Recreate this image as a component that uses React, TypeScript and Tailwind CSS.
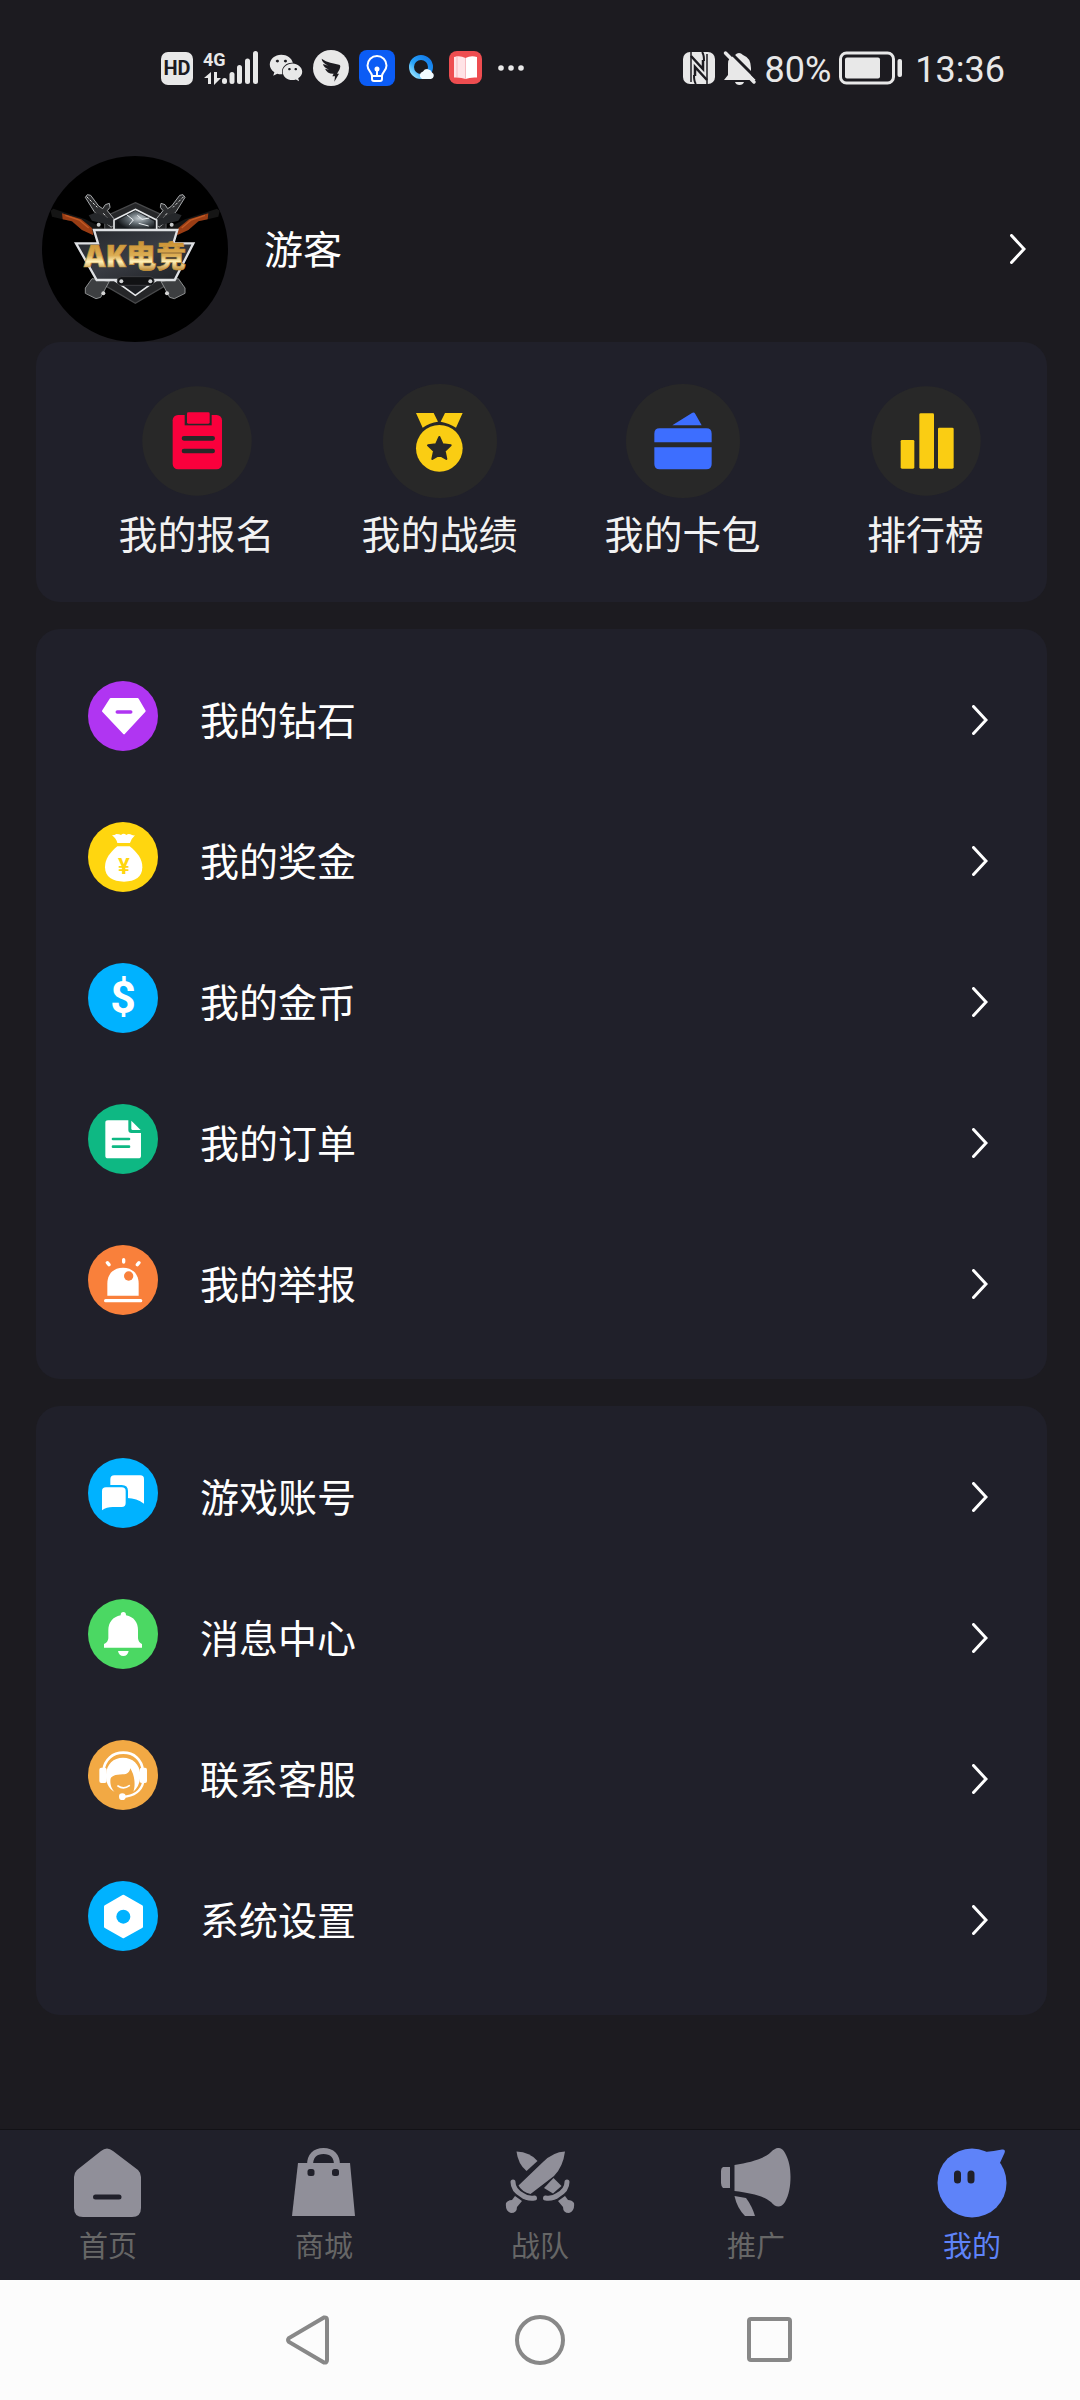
import type { ReactNode } from "react"
import { useState } from "react"
import { FaWeixin } from "react-icons/fa"
import { clsx } from "clsx"

interface MenuItem {
  label: string
  color: string
  icon: ReactNode
}

interface TabItem {
  label: string
  icon: ReactNode
}

function Chevron() {
  return (
    <svg viewBox="0 0 16 30" className="w-4 h-[30px] shrink-0" fill="none" stroke="#fff" strokeWidth="3">
      <path d="M1.5 1.5 14 15 1.5 28.5" strokeLinecap="round" strokeLinejoin="miter" />
    </svg>
  )
}

// ---------- status bar ----------

function SignalIcon() {
  return (
    <svg viewBox="0 0 56 36" className="w-14 h-9" fill="#e8e8e8">
      <text x="0" y="16" fontFamily="Roboto" fontWeight="700" fontSize="18">
        4G
      </text>
      <path d="M1 28 8 22V34H5V28ZM11 22H14V28H18L11 35Z" />
      <rect x="19" y="28" width="5" height="6" rx="2.5" />
      <rect x="26.5" y="22" width="5" height="12" rx="2.5" />
      <rect x="34" y="15" width="5" height="19" rx="2.5" />
      <rect x="42" y="8.5" width="5" height="25.5" rx="2.5" />
      <rect x="50" y="1" width="5" height="33" rx="2.5" />
    </svg>
  )
}

function BirdIcon() {
  return (
    <svg viewBox="0 0 108 108" className="size-9">
      <circle cx="54" cy="54" r="54" fill="#e8e8e8" />
      <path
        d="M26 26C42 38 62 40 78 44 84 46 82 52 79 59L72 71H78L64 95 66 79H58L62 71C50 72 40 66 36 56L48 59C38 55 31 49 30 42L46 47C34 41 26 34 26 26Z"
        fill="#1c1b20"
      />
    </svg>
  )
}

function BulbIcon() {
  return (
    <svg viewBox="0 0 36 36" className="size-9" fill="none" stroke="#fff" strokeWidth="2">
      <rect width="36" height="36" rx="8" fill="#0b5cf5" stroke="none" />
      <path d="M13 26C13 22 8.5 21 8.5 15.5a9.5 9.5 0 0 1 19 0C27.5 21 23 22 23 26Z" />
      <path d="M13 26V29Q13 31 15 31H21Q23 31 23 29V26M18 19V26" />
      <circle cx="18" cy="19" r="1.5" fill="#fff" />
    </svg>
  )
}

function BrowserIcon() {
  return (
    <svg viewBox="0 0 34 36" className="w-[34px] h-9">
      <defs>
        <linearGradient id="ring" x1="1" y1="0" x2="0" y2="1">
          <stop offset="0" stopColor="#1178ea" />
          <stop offset="0.6" stopColor="#28a4fa" />
          <stop offset="1" stopColor="#a5eaff" />
        </linearGradient>
      </defs>
      <circle cx="16" cy="17" r="9.5" fill="none" stroke="url(#ring)" strokeWidth="5" />
      <path d="M17 29a4 4 0 0 1 1-7.5 5 5 0 0 1 9 1A3.500 3.500 0 0 1 26 29Z" fill="#f3fbff" />
    </svg>
  )
}

function BookIcon() {
  return (
    <svg viewBox="0 0 34 34" className="size-[34px]">
      <rect width="33" height="33" rx="8" fill="#ee4d50" />
      <path d="M5 6Q11 4 16.5 7V28Q12 26 5 26.5Z" fill="#ffe3e6" />
      <path d="M28 6Q22 4 16.5 7V28Q21 26 28 26.5Z" fill="#fff" />
      <path d="M8 5V26M16.5 7V27" stroke="#f7b9bf" strokeWidth="1" />
    </svg>
  )
}

function NfcIcon() {
  return (
    <svg viewBox="0 0 32 32" className="size-8">
      <rect width="32" height="32" rx="7" fill="#e8e8e8" />
      <path d="M8 0V30M24 2V32" stroke="#1c1b20" strokeWidth="1.5" />
      <path d="M8 4 20 17V8M24 28 12 15V24" fill="none" stroke="#1c1b20" strokeWidth="2.5" />
      <path d="M19 0C21 2 21 5 21 9M13 32C11 30 11 27 11 23" fill="none" stroke="#1c1b20" strokeWidth="2" />
    </svg>
  )
}

function MutedBellIcon() {
  return (
    <svg viewBox="0 0 34 36" className="w-[34px] h-9" fill="#e8e8e8">
      <path d="M12 5Q16 1 20 5 28 8 28 18V25L33 30H1L5 25V14Q5 10 7 8Z" />
      <path d="M12 32H21Q20 35 16.500 35 13 35 12 32Z" />
      <path d="M5 0 34 29" stroke="#1c1b20" strokeWidth="3" />
      <path d="M2.500 3 31 32" stroke="#e8e8e8" strokeWidth="3.5" strokeLinecap="round" />
    </svg>
  )
}

function BatteryIcon() {
  return (
    <svg viewBox="0 0 64 34" className="w-16 h-[34px]">
      <rect x="1.5" y="2" width="53" height="30" rx="6" fill="none" stroke="#e8e8e8" strokeWidth="3" />
      <rect x="6" y="6.5" width="35" height="21" rx="2" fill="#e8e8e8" />
      <rect x="58.5" y="8" width="4.5" height="18" rx="2" fill="#e8e8e8" />
    </svg>
  )
}

function StatusBar() {
  return (
    <header className="h-[136px] pl-[161px] pr-[75px] flex items-center justify-between text-[#e8e8e8]">
      <div className="flex items-center gap-[10px]">
        <span className="w-8 h-[33px] rounded-[7px] bg-[#e8e8e8] text-[#1c1b20] font-[Roboto] font-bold text-[20px] leading-[33px] text-center">
          HD
        </span>
        <SignalIcon />
        <FaWeixin className="size-[34px]" />
        <BirdIcon />
        <BulbIcon />
        <BrowserIcon />
        <BookIcon />
        <svg viewBox="0 0 34 8" className="w-[34px] h-2" fill="#e8e8e8">
          <circle cx="8" cy="4" r="2.8" />
          <circle cx="18" cy="4" r="2.8" />
          <circle cx="28" cy="4" r="2.8" />
        </svg>
      </div>
      <div className="flex items-center gap-2 font-[Roboto] text-[36px] leading-[40px]">
        <NfcIcon />
        <MutedBellIcon />
        <span className="pt-1">80%</span>
        <BatteryIcon />
        <span className="pt-1 pl-1">13:36</span>
      </div>
    </header>
  )
}

// ---------- profile ----------

// one of the two crossed rifles, mirrored for the other side
function Rifle() {
  return (
    <g>
      <path d="M26 164 34 158 130 190 190 220 170 238 120 222 88 196 30 182Z" fill="#151515" />
      <path d="M60 172 118 190 150 216 154 238 120 222 90 196 62 190Z" fill="#9a3d14" />
      <path d="M70 178 112 192 140 216" fill="none" stroke="#c25a25" strokeWidth="4" />
      <path
        d="M130 124 136 116 146 118 170 150 182 158 190 146 202 142 204 154 196 164 222 196 208 214 178 190 156 166Z"
        fill="#2c2d2f"
        stroke="#a9abad"
        strokeWidth="3"
      />
      <path d="M134 122 166 154M184 172 206 198" stroke="#dcdcdc" strokeWidth="3" strokeDasharray="8 5" />
      <path d="M140 178 160 170 200 186 240 192 236 216 190 204 150 194Z" fill="#25272a" />
      <circle cx="170" cy="206" r="6" fill="#c7c9ca" />
      <path d="M150 368 130 396 130 412 162 428 176 424 190 398 202 376Z" fill="#3d3f41" stroke="#8d8f90" strokeWidth="3" />
      <circle cx="184" cy="412" r="6" fill="#d5d5d5" />
    </g>
  )
}

function Avatar() {
  return (
    <svg viewBox="0 0 558 558" className="size-[186px] shrink-0 rounded-full bg-black">
      <defs>
        <linearGradient id="gold" x1="0" y1="0" x2="0" y2="1">
          <stop offset="0.1" stopColor="#c88b2c" />
          <stop offset="0.5" stopColor="#dcae55" />
          <stop offset="0.65" stopColor="#fff0b8" />
          <stop offset="0.9" stopColor="#b57a22" />
        </linearGradient>
        <linearGradient id="steel" x1="0" y1="0" x2="1" y2="1">
          <stop offset="0" stopColor="#24262a" />
          <stop offset="0.5" stopColor="#393c43" />
          <stop offset="1" stopColor="#1d1f23" />
        </linearGradient>
        <radialGradient id="globe" cx="0.6" cy="0.4" r="0.6">
          <stop offset="0" stopColor="#c3cbd0" />
          <stop offset="0.5" stopColor="#5d666c" />
          <stop offset="1" stopColor="#15181b" />
        </radialGradient>
      </defs>
      <path d="M280 140 372 182V388L280 442 188 388V182Z" fill="#252628" stroke="#48494b" strokeWidth="4" />
      <Rifle />
      <g transform="translate(559 0) scale(-1 1)">
        <Rifle />
      </g>
      <path d="M280 160 344 192V372L280 418 216 372V192Z" fill="#1c1e22" stroke="#e4e6e8" strokeWidth="5" />
      <path d="M224 196 280 164 336 196V222H224Z" fill="url(#globe)" />
      <path d="M254 176 274 192 262 206M286 178 300 190 322 186M290 202 320 210" fill="none" stroke="#eef2f4" strokeWidth="3" />
      <path
        d="M156 222H406L394 262H454L398 372H164L102 262H168Z"
        fill="url(#steel)"
        stroke="#dfe1e4"
        strokeWidth="7"
      />
      <rect x="226" y="362" width="110" height="26" rx="12" fill="#111214" stroke="#3c3d40" strokeWidth="3" />
      <circle cx="238" cy="376" r="6" fill="#d0d2d4" />
      <circle cx="325" cy="376" r="6" fill="#d0d2d4" />
      <text
        x="279"
        y="333"
        textAnchor="middle"
        fontFamily="'Open Sans', 'Noto Sans CJK SC', sans-serif"
        fontWeight="900"
        fontSize="90"
        fill="url(#gold)"
        stroke="#c8963c"
        strokeWidth="2"
      >
        AK电竞
      </text>
    </svg>
  )
}

// ---------- shortcuts ----------

const shortcuts: MenuItem[] = [
  {
    label: "我的报名",
    color: "#fa003c",
    icon: (
      <>
        <circle cx="171" cy="171" r="164" fill="#282828" />
        <rect x="98" y="93" width="148" height="163" rx="16" />
        <path d="M134 88H215V124H134Z" fill="#282828" />
        <rect x="141" y="85" width="68" height="34" rx="4" />
        <path d="M132 163H218M132 201H218" stroke="#282828" strokeWidth="14" strokeLinecap="round" />
      </>
    ),
  },
  {
    label: "我的战绩",
    color: "#facd13",
    icon: (
      <>
        <circle cx="171" cy="171" r="171" fill="#282828" />
        <path d="M99 87H152L165 113Q140 116 119 131ZM186 87H239L219 131Q198 117 173 113Z" />
        <circle cx="169" cy="193" r="70" />
        <path
          d="M169 159 179 181 203 184 185 201 190 225 169 213 148 225 153 201 135 184 159 181Z"
          fill="#282828"
          stroke="#282828"
          strokeWidth="6"
          strokeLinejoin="round"
        />
      </>
    ),
  },
  {
    label: "我的卡包",
    color: "#3d6eff",
    icon: (
      <>
        <circle cx="171" cy="171" r="171" fill="#282828" />
        <path d="M139 124 198 87Q204 83 208 90L227 124Z" />
        <path d="M85 175V149Q85 133 101 133H241Q257 133 257 149V175ZM85 190H257V240Q257 256 241 256H101Q85 256 85 240Z" />
      </>
    ),
  },
  {
    label: "排行榜",
    color: "#facd13",
    icon: (
      <>
        <circle cx="171" cy="171" r="164" fill="#282828" />
        <rect x="95" y="168" width="41" height="86" rx="4" />
        <rect x="151" y="88" width="44" height="166" rx="4" />
        <rect x="207" y="131" width="47" height="123" rx="4" />
      </>
    ),
  },
]

// ---------- menu rows, glyphs drawn white on a coloured disc ----------

const accountMenu: MenuItem[] = [
  {
    label: "我的钻石",
    color: "#b035f2",
    icon: (
      <>
        <path d="M68 54H149L170 90 108 157 45 90Z" stroke="#fff" strokeWidth="6" strokeLinejoin="round" />
        <path d="M88 93H128" stroke="#b035f2" strokeWidth="11" strokeLinecap="round" />
      </>
    ),
  },
  {
    label: "我的奖金",
    color: "#ffd60f",
    icon: (
      <>
        <path d="M72 40Q80 40 85 36 95 36 99 39 107 32 115 39 121 34 127 37 133 41 141 40 130 50 126 63H88Q85 50 72 40Z" />
        <path d="M88 73H125C148 92 163 110 163 136C163 164 142 179 108 179S51 164 51 136C51 110 66 92 88 73Z" />
        <text
          x="108"
          y="156"
          textAnchor="middle"
          fontFamily="Roboto"
          fontWeight="700"
          fontSize="66"
          fill="#ffd60f"
        >
          ¥
        </text>
      </>
    ),
  },
  {
    label: "我的金币",
    color: "#00b2ff",
    icon: (
      <text x="105" y="151" textAnchor="middle" fontFamily="Roboto" fontWeight="700" fontSize="134">
        $
      </text>
    ),
  },
  {
    label: "我的订单",
    color: "#0eb883",
    icon: (
      <>
        <path d="M60 49H121V78Q121 87 130 87H159V155Q159 163 151 163H60Q52 163 52 155V56Q52 49 60 49Z" />
        <path d="M130 50 158 78H134Q130 78 130 74Z" />
        <path d="M75 105H123M75 128H123" stroke="#0eb883" strokeWidth="8" strokeLinecap="round" />
      </>
    ),
  },
  {
    label: "我的举报",
    color: "#f9803b",
    icon: (
      <>
        <path d="M58 152V116C58 86 78 68 105 68S152 86 152 116V152Z" />
        <circle cx="122" cy="93" r="14" fill="#f9803b" />
        <path
          d="M53 167H158M107 44V51M58 53 63 59M153 53 148 59"
          stroke="#fff"
          strokeWidth="10"
          strokeLinecap="round"
        />
      </>
    ),
  },
]

const serviceMenu: MenuItem[] = [
  {
    label: "游戏账号",
    color: "#00b2ff",
    icon: (
      <>
        <path d="M67 64Q67 52 79 52H157Q168 52 168 63V137Q146 121 118 120H67Z" />
        <path
          d="M42 99Q42 88 54 88H101Q113 88 113 99V135Q113 147 101 147H74Q56 147 42 157Z"
          stroke="#00b2ff"
          strokeWidth="14"
        />
        <path d="M42 99Q42 88 54 88H101Q113 88 113 99V135Q113 147 101 147H74Q56 147 42 157Z" />
      </>
    ),
  },
  {
    label: "消息中心",
    color: "#4bd863",
    icon: (
      <>
        <path d="M98 49Q98 39 106 39 114 39 114 49C138 54 150 70 150 94V118Q151 130 162 135V146H48V135Q60 130 61 118V94C61 70 74 54 98 49Z" />
        <path d="M90 156H122Q119 171 106 171 93 171 90 156Z" />
      </>
    ),
  },
  {
    label: "联系客服",
    color: "#f2a944",
    icon: (
      <>
        <path d="M46 92C50 58 74 38 106 38S161 58 165 92" fill="none" stroke="#fff" strokeWidth="8" />
        <rect x="34" y="83" width="22" height="46" rx="6" />
        <rect x="155" y="83" width="22" height="46" rx="6" />
        <path d="M54 104C56 72 76 53 105 53S155 72 157 104C157 128 149 144 136 155 142 138 142 110 127 85 124 98 118 103 104 103 80 104 67 108 67 122 67 138 72 147 80 156 62 146 53 128 54 104Z" />
        <path d="M90 138Q107 150 124 137" fill="none" stroke="#fff" strokeWidth="5" strokeLinecap="round" />
        <path d="M166 126Q156 167 104 171" fill="none" stroke="#fff" strokeWidth="7" />
        <circle cx="103" cy="170" r="10" />
      </>
    ),
  },
  {
    label: "系统设置",
    color: "#00b2ff",
    icon: (
      <>
        <path d="M106 46 160 77V137L106 167 53 137V77Z" stroke="#fff" strokeWidth="10" strokeLinejoin="round" />
        <circle cx="106" cy="107" r="21" fill="#00b2ff" />
      </>
    ),
  },
]

function MenuCard({ items }: { items: MenuItem[] }) {
  return (
    <ul className="rounded-3xl bg-[#20202a] pt-5 pb-[25px]">
      {items.map((item) => (
        <li key={item.label}>
          <button type="button" className="w-full h-[141px] pl-[52px] pr-[59px] flex items-center gap-[42px]">
            <svg viewBox="0 0 210 210" className="size-[70px] mb-2 shrink-0" fill="#fff">
              <circle cx="105" cy="105" r="105" fill={item.color} />
              {item.icon}
            </svg>
            <span className="flex-1 mb-1 text-left text-[39px] leading-[56px] text-white">{item.label}</span>
            <Chevron />
          </button>
        </li>
      ))}
    </ul>
  )
}

// ---------- tab bar ----------

const tabs: TabItem[] = [
  {
    label: "首页",
    icon: (
      <>
        <path d="M28 3Q34-2 40 3L65 22Q68 25 68 29V60Q68 69 59 69H10Q1 69 1 60V29Q1 25 4 22Z" />
        <path d="M22.5 49H46" stroke="#20202a" strokeWidth="5" strokeLinecap="round" />
      </>
    ),
  },
  {
    label: "商城",
    icon: (
      <>
        <path d="M9 15H61L66 68H3Z" />
        <path d="M21 17C21 8 26 3 34.5 3S48 8 48 17" fill="none" stroke="#908f99" strokeWidth="6" />
        <rect x="18.5" y="21" width="7" height="7" rx="2.5" fill="#20202a" />
        <rect x="43" y="21" width="7" height="7" rx="2.5" fill="#20202a" />
      </>
    ),
  },
  {
    label: "战队",
    icon: (
      <>
        <path d="M11.5 3.5Q25 4 32.5 13L21.5 23Q13 16 11.5 3.5Z" />
        <path d="M60 3.5Q58 19 49 28L25.5 46Q17 44 13.5 37.5L38 14Q48 4 60 3.5Z" />
        <path d="M48.5 30 56.5 38 48 45.5 39 40Z" />
        <path
          d="M8 34Q8 42 17 47 22 51 29.5 50M62 34Q62 42 53 47 48 51 40.5 50"
          fill="none"
          stroke="#908f99"
          strokeWidth="5"
          strokeLinecap="round"
        />
        <path d="M10 48 17 53 12 59Q12 65 6 65 0 63 1 55 3 52 7 52ZM60 48 53 53 58 59Q58 65 64 65 70 63 69 55 67 52 63 52Z" />
      </>
    ),
  },
  {
    label: "推广",
    icon: (
      <>
        <path d="M2 19H9V40H2Q0 38 0 35V23Q0 20 2 19Z" />
        <path d="M13.5 17C30 14 43 11 50 4 56-2 61-1 64 5 68 12 69.5 20 69.5 29S68 47 64 54C60 60 55 60 50 54 43 48 30 45 13.5 43Z" />
        <path d="M13.5 48 25 50Q31 58 34 68H24Q16 60 13.5 48Z" />
      </>
    ),
  },
  {
    label: "我的",
    icon: (
      <>
        <circle cx="35" cy="35" r="34.5" />
        <path d="M48 4Q57 3 65 1.5 69 1 67.5 5L62 17Z" />
        <rect x="17" y="22.5" width="7" height="13" rx="3.5" fill="#20202a" />
        <rect x="30.5" y="22.5" width="7" height="13" rx="3.5" fill="#20202a" />
      </>
    ),
  },
]

export default function App() {
  const [activeTab, setActiveTab] = useState("我的")

  return (
    <div className="min-h-screen flex flex-col bg-[#1c1b20] font-['Noto_Sans_CJK_SC',sans-serif]">
      <StatusBar />

      <main className="flex-1 pl-9 pr-[33px] pt-5">
        <button type="button" className="w-full pl-[6px] pr-[21px] flex items-center gap-9">
          <Avatar />
          <span className="flex-1 mb-1 text-left text-[39px] leading-[56px] text-white">游客</span>
          <Chevron />
        </button>

        <div className="space-y-[27px]">
          <div className="grid grid-cols-4 rounded-3xl bg-[#20202a] pl-[39px] pt-[42px] pb-[42px]">
            {shortcuts.map((item) => (
              <button type="button" key={item.label} className="flex flex-col items-center gap-[6px]">
                <svg viewBox="0 0 342 342" className="size-[114px]" fill={item.color}>
                  {item.icon}
                </svg>
                <span className="text-[39px] leading-[56px] text-[#f2f2f2]">{item.label}</span>
              </button>
            ))}
          </div>

          <MenuCard items={accountMenu} />
          <MenuCard items={serviceMenu} />
        </div>
      </main>

      <nav className="grid grid-cols-5 border-t border-[#121216] bg-[#20202a] pt-[18px] pb-4">
        {tabs.map((tab) => (
          <button
            type="button"
            key={tab.label}
            onClick={() => setActiveTab(tab.label)}
            className="flex flex-col items-center gap-[6px]"
          >
            <svg
              viewBox="0 0 70 70"
              className={clsx("size-[70px]", activeTab === tab.label ? "fill-[#5e83f9]" : "fill-[#908f99]")}
            >
              {tab.icon}
            </svg>
            <span
              className={clsx(
                "text-[29px] leading-[40px]",
                activeTab === tab.label ? "text-[#5e83f9]" : "text-[#666666]",
              )}
            >
              {tab.label}
            </span>
          </button>
        ))}
      </nav>

      <footer className="h-[120px] flex items-center justify-center gap-[180px] bg-[#fcfcfc]">
        <button type="button" aria-label="返回">
          <svg viewBox="0 0 50 50" className="size-[50px]" fill="none" stroke="#888" strokeWidth="4">
            <path d="M4 23Q2 25 4 27L39 47.5Q42 48 42 45V5Q42 2 39 2.5Z" />
          </svg>
        </button>
        <button type="button" aria-label="主页">
          <svg viewBox="0 0 50 50" className="size-[50px]" fill="none" stroke="#888" strokeWidth="4">
            <circle cx="25" cy="25" r="23" />
          </svg>
        </button>
        <button type="button" aria-label="最近任务">
          <svg viewBox="0 0 50 50" className="size-[50px]" fill="none" stroke="#888" strokeWidth="4">
            <rect x="4" y="4" width="41" height="41" rx="2" />
          </svg>
        </button>
      </footer>
    </div>
  )
}
